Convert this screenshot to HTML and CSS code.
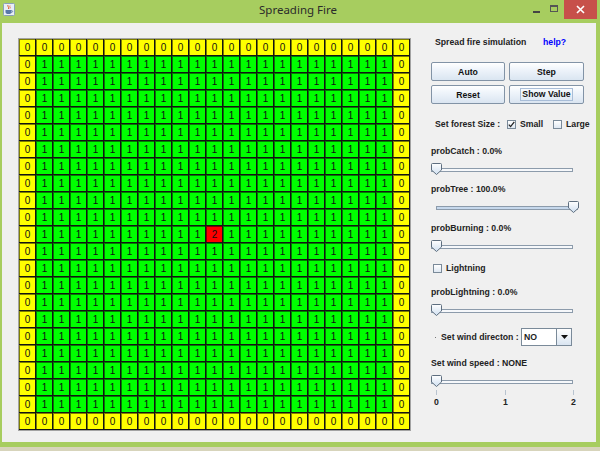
FILE: index.html
```html
<!DOCTYPE html>
<html>
<head>
<meta charset="utf-8">
<title>Spreading Fire</title>
<link rel="stylesheet" href="styles.css">
</head>
<body>
<div class="window">
  <div class="titlebar">
    <div class="app-icon">
      <svg width="12" height="13" viewBox="0 0 12 13">
        <rect x="0.5" y="0.5" width="11" height="12" rx="1" fill="#e8eef6" stroke="#8aa0b8"/>
        <path d="M5 2 C4 3.5 6.5 4 5.5 6" stroke="#e05a2a" fill="none" stroke-width="1"/>
        <path d="M7 2.5 C6.2 3.8 7.8 4.2 7 5.5" stroke="#e05a2a" fill="none" stroke-width="0.8"/>
        <path d="M2.5 7 H8.5 V9 C8.5 10.5 7.5 11 5.5 11 C3.5 11 2.5 10.5 2.5 9 Z" fill="#5877a8"/>
        <path d="M8.5 7.5 C10 7.5 10 9.5 8.3 9.5" stroke="#5877a8" fill="none" stroke-width="0.9"/>
      </svg>
    </div>
    <div class="title">Spreading Fire</div>
    <div class="controls">
      <div class="ctl-min"></div>
      <div class="ctl-max"></div>
      <div class="ctl-close">
        <svg width="9" height="9" viewBox="0 0 9 9"><path d="M1 1 L8 8 M8 1 L1 8" stroke="#fff" stroke-width="1.6"/></svg>
      </div>
    </div>
  </div>
  <div class="client">
    <div class="forest" id="forest"></div>
    <div class="panel">
      <div class="head">
        <span>Spread fire simulation</span>
        <span class="help">help?</span>
      </div>
      <div class="buttons">
        <div class="btn">Auto</div>
        <div class="btn">Step</div>
        <div class="btn">Reset</div>
        <div class="btn"><span class="focus">Show Value</span></div>
      </div>
      <div class="size">
        <span class="size-label">Set forest Size :</span>
        <span class="opt opt-small">
          <span class="check on"><svg width="7" height="7" viewBox="0 0 7 7"><path d="M0.8 3.6 L2.6 5.6 L6.3 0.8" stroke="#222" stroke-width="1.3" fill="none"/></svg></span>
          <span>Small</span>
        </span>
        <span class="opt">
          <span class="check"></span>
          <span>Large</span>
        </span>
      </div>
      <div class="label lbl-catch">probCatch : 0.0%</div>
      <div class="slider">
        <div class="track"></div>
        <svg class="thumb" width="11" height="12" viewBox="0 0 11 12"><defs><linearGradient id="t1" x1="0" y1="0" x2="0" y2="1"><stop offset="0" stop-color="#ffffff"/><stop offset="1" stop-color="#cfdff0"/></linearGradient></defs><path d="M1.5 .5 H9.5 Q10.5 .5 10.5 1.5 V7 L5.5 11.5 L.5 7 V1.5 Q.5 .5 1.5 .5Z" fill="url(#t1)" stroke="#5e6e7f"/></svg>
      </div>
      <div class="label lbl-tree">probTree : 100.0%</div>
      <div class="slider slider-shift">
        <div class="track full"></div>
        <svg class="thumb thumb-max" width="11" height="12" viewBox="0 0 11 12"><defs><linearGradient id="t2" x1="0" y1="0" x2="0" y2="1"><stop offset="0" stop-color="#ffffff"/><stop offset="1" stop-color="#cfdff0"/></linearGradient></defs><path d="M1.5 .5 H9.5 Q10.5 .5 10.5 1.5 V7 L5.5 11.5 L.5 7 V1.5 Q.5 .5 1.5 .5Z" fill="url(#t2)" stroke="#5e6e7f"/></svg>
      </div>
      <div class="label lbl-burn">probBurning : 0.0%</div>
      <div class="slider">
        <div class="track"></div>
        <svg class="thumb" width="11" height="12" viewBox="0 0 11 12"><defs><linearGradient id="t3" x1="0" y1="0" x2="0" y2="1"><stop offset="0" stop-color="#ffffff"/><stop offset="1" stop-color="#cfdff0"/></linearGradient></defs><path d="M1.5 .5 H9.5 Q10.5 .5 10.5 1.5 V7 L5.5 11.5 L.5 7 V1.5 Q.5 .5 1.5 .5Z" fill="url(#t3)" stroke="#5e6e7f"/></svg>
      </div>
      <div class="lightning">
        <span class="check"></span>
        <span>Lightning</span>
      </div>
      <div class="label lbl-light">probLightning : 0.0%</div>
      <div class="slider">
        <div class="track"></div>
        <svg class="thumb" width="11" height="12" viewBox="0 0 11 12"><defs><linearGradient id="t4" x1="0" y1="0" x2="0" y2="1"><stop offset="0" stop-color="#ffffff"/><stop offset="1" stop-color="#cfdff0"/></linearGradient></defs><path d="M1.5 .5 H9.5 Q10.5 .5 10.5 1.5 V7 L5.5 11.5 L.5 7 V1.5 Q.5 .5 1.5 .5Z" fill="url(#t4)" stroke="#5e6e7f"/></svg>
      </div>
      <div class="wind">
        <span class="dot"></span>
        <span class="wind-label">Set wind directon :</span>
        <div class="combo">
          <span class="combo-value">NO</span>
          <span class="combo-arrow"><svg width="7" height="4" viewBox="0 0 7 4"><path d="M0 0 H7 L3.5 4Z" fill="#111"/></svg></span>
        </div>
      </div>
      <div class="label lbl-speed">Set wind speed : NONE</div>
      <div class="slider">
        <div class="track"></div>
        <svg class="thumb" width="11" height="12" viewBox="0 0 11 12"><defs><linearGradient id="t5" x1="0" y1="0" x2="0" y2="1"><stop offset="0" stop-color="#ffffff"/><stop offset="1" stop-color="#cfdff0"/></linearGradient></defs><path d="M1.5 .5 H9.5 Q10.5 .5 10.5 1.5 V7 L5.5 11.5 L.5 7 V1.5 Q.5 .5 1.5 .5Z" fill="url(#t5)" stroke="#5e6e7f"/></svg>
      </div>
      <div class="ticks">
        <span class="tick"></span>
        <span class="tick"></span>
        <span class="tick"></span>
      </div>
      <div class="tick-labels">
        <span>0</span>
        <span>1</span>
        <span>2</span>
      </div>
    </div>
  </div>
  <div class="desk"></div>
</div>
<script src="script.js"></script>
</body>
</html>
```

FILE: styles.css
```css
* { box-sizing: border-box; }
html, body { margin: 0; padding: 0; }
body {
  width: 600px;
  height: 451px;
  overflow: hidden;
  background: #d7d4bb;
  font-family: "Liberation Sans", Arial, sans-serif;
}
.window {
  width: 600px;
  height: 451px;
  display: flex;
  flex-direction: column;
  background: #a7cd5f;
}
.titlebar {
  height: 23px;
  flex: none;
  display: grid;
  grid-template-columns: 1fr auto 1fr;
  align-items: start;
}
.app-icon {
  padding: 3px 0 0 3px;
  height: 16px;
}
.app-icon svg { display: block; }
.title {
  font-family: "Noto Sans", "Open Sans", sans-serif;
  font-size: 11.5px;
  color: #2b2b2b;
  line-height: 20px;
  margin-left: -4px;
}
.controls {
  justify-self: end;
  display: flex;
  align-items: flex-start;
  margin-right: 3px;
}
.ctl-min {
  width: 7px;
  height: 2px;
  background: #444;
  margin: 11px 10px 0 0;
}
.ctl-max {
  width: 8px;
  height: 7px;
  border: 1px solid #555;
  border-top-width: 2px;
  margin: 5px 6px 0 0;
}
.ctl-close {
  width: 33px;
  height: 19px;
  background: #c7504a;
  display: flex;
  align-items: center;
  justify-content: center;
}
.ctl-close svg { display: block; }

.client {
  height: 419px;
  flex: none;
  margin: 0 4px 0 2px;
  background: #f0f0f0;
  display: flex;
  align-items: flex-start;
}
.desk {
  margin-top: 5px;
  height: 4px;
  background: #d7d4bb;
}

.forest {
  margin: 15px 0 0 16px;
  border: 1px solid #a3a3a3;
  display: grid;
  grid-template-columns: repeat(23, 17px);
  grid-auto-rows: 17px;
}
.cell {
  display: flex;
  align-items: center;
  justify-content: center;
  font-size: 10px;
  color: #111;
  box-shadow: inset -1px -1px 0 #141414, inset 1px 1px 0 rgba(0, 0, 0, 0.5);
}
.cell.y { background: #ffff00; }
.cell.g { background: #00ff00; }
.cell.r { background: #ff0000; }

.panel {
  margin-left: 20px;
  padding-top: 12px;
  width: 160px;
  display: flex;
  flex-direction: column;
  font-size: 8.7px;
  font-weight: bold;
  color: #222;
}
.head {
  display: grid;
  grid-template-columns: 108px auto;
  padding-left: 4px;
  line-height: 14px;
  height: 14px;
}
.help { color: #0000ff; }
.buttons {
  margin-top: 13px;
  display: grid;
  grid-template-columns: 74px 75px;
  grid-auto-rows: 19px;
  gap: 4px;
}
.btn {
  border: 1px solid #8293a6;
  border-radius: 2px;
  background: linear-gradient(#ffffff 0%, #f0f5fb 35%, #dae5f1 100%);
  display: flex;
  align-items: center;
  justify-content: center;
  color: #111;
}
.focus {
  border: 1px solid #a8bdd8;
  padding: 0 1px;
  line-height: 11px;
}
.size {
  margin-top: 13px;
  height: 14px;
  display: flex;
  align-items: center;
  padding-left: 4px;
}
.size-label { width: 72px; }
.opt {
  display: flex;
  align-items: center;
  gap: 4px;
}
.opt-small { width: 46px; }
.check {
  width: 9px;
  height: 9px;
  border: 1px solid #7a8a99;
  background: linear-gradient(#ffffff, #dfe8f2);
  display: flex;
  align-items: center;
  justify-content: center;
}
.check svg { display: block; }
.label {
  height: 14px;
  line-height: 14px;
}
.lbl-catch { margin-top: 13px; }
.lbl-tree { margin-top: 7px; }
.lbl-burn { margin-top: 8px; }
.lbl-light { margin-top: 10px; }
.lbl-speed { margin-top: 10px; }
.slider {
  position: relative;
  width: 148px;
  height: 12px;
  margin-top: 5px;
}
.slider-shift { margin-left: 5px; }
.track {
  margin-top: 5px;
  width: 142px;
  height: 4px;
  border: 1px solid #8c9bab;
  background: #f6f8fb;
}
.track.full { background: #c6d8ec; }
.thumb {
  position: absolute;
  top: 0;
  left: 0;
  display: block;
}
.thumb-max { left: 132px; }
.lightning {
  margin-top: 9px;
  height: 14px;
  display: flex;
  align-items: center;
  gap: 4px;
  padding-left: 2px;
}
.wind {
  margin-top: 12px;
  height: 18px;
  display: flex;
  align-items: center;
  padding-left: 4px;
}
.dot {
  width: 1px;
  height: 1px;
  background: #777;
  margin-right: 5px;
}
.wind-label { width: 80px; }
.combo {
  width: 51px;
  height: 18px;
  border: 1px solid #7a8a99;
  background: #fff;
  display: flex;
}
.combo-value {
  flex: 1;
  padding-left: 2px;
  line-height: 16px;
}
.combo-arrow {
  width: 15px;
  border-left: 1px solid #7a8a99;
  background: linear-gradient(#ffffff, #dae5f1);
  display: flex;
  align-items: center;
  justify-content: center;
}
.combo-arrow svg { display: block; }
.ticks {
  position: relative;
  height: 5px;
  margin-top: 3px;
  width: 148px;
}
.tick {
  position: absolute;
  top: 0;
  width: 1px;
  height: 5px;
  background: #b8c3cf;
}
.tick:nth-child(1) { left: 5px; }
.tick:nth-child(2) { left: 74px; }
.tick:nth-child(3) { left: 142px; }
.tick-labels {
  position: relative;
  height: 12px;
  margin-top: 1px;
  width: 148px;
  line-height: 12px;
}
.tick-labels span {
  position: absolute;
  top: 0;
  width: 10px;
  margin-left: -5px;
  text-align: center;
}
.tick-labels span:nth-child(1) { left: 5.5px; }
.tick-labels span:nth-child(2) { left: 74.5px; }
.tick-labels span:nth-child(3) { left: 142.5px; }
```

FILE: script.js
```js
(function () {
  var forest = document.getElementById('forest');
  var n = 23;
  var names = ['y', 'g', 'r'];
  for (var r = 0; r < n; r++) {
    for (var c = 0; c < n; c++) {
      var v = (r === 0 || c === 0 || r === n - 1 || c === n - 1) ? 0 : 1;
      if (r === 11 && c === 11) v = 2;
      var d = document.createElement('div');
      d.className = 'cell ' + names[v];
      d.textContent = String(v);
      forest.appendChild(d);
    }
  }
})();
```
